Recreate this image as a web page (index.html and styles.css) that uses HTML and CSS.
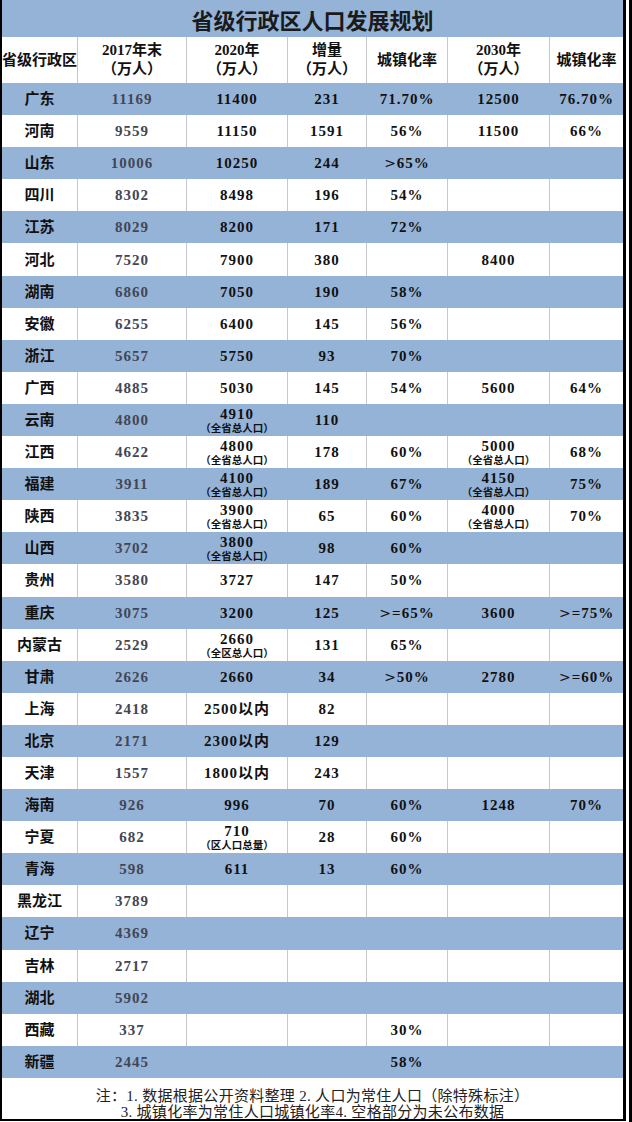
FILE: index.html
```html
<!DOCTYPE html>
<html lang="zh-CN">
<head>
<meta charset="utf-8">
<title>省级行政区人口发展规划</title>
<link rel="stylesheet" href="styles.css">
</head>
<body>
<div class="page">
  <div class="sheet">
    <table class="plan">
      <colgroup>
        <col class="c1"><col class="c2"><col class="c3"><col class="c4"><col class="c5"><col class="c6"><col class="c7">
      </colgroup>
      <thead>
        <tr class="title-row"><th colspan="7" class="title">省级行政区人口发展规划</th></tr>
        <tr class="head-row">
          <th>省级行政区</th>
          <th>2017年末<br>（万人）</th>
          <th>2020年<br>（万人）</th>
          <th>增量<br>（万人）</th>
          <th>城镇化率</th>
          <th>2030年<br>（万人）</th>
          <th>城镇化率</th>
        </tr>
      </thead>
      <tbody>
        <tr class="b"><td>广东</td><td>11169</td><td>11400</td><td>231</td><td>71.70%</td><td>12500</td><td>76.70%</td></tr>
        <tr class="w"><td>河南</td><td>9559</td><td>11150</td><td>1591</td><td>56%</td><td>11500</td><td>66%</td></tr>
        <tr class="b"><td>山东</td><td>10006</td><td>10250</td><td>244</td><td><span class="gt">&gt;</span>65%</td><td></td><td></td></tr>
        <tr class="w"><td>四川</td><td>8302</td><td>8498</td><td>196</td><td>54%</td><td></td><td></td></tr>
        <tr class="b"><td>江苏</td><td>8029</td><td>8200</td><td>171</td><td>72%</td><td></td><td></td></tr>
        <tr class="w"><td>河北</td><td>7520</td><td>7900</td><td>380</td><td></td><td>8400</td><td></td></tr>
        <tr class="b"><td>湖南</td><td>6860</td><td>7050</td><td>190</td><td>58%</td><td></td><td></td></tr>
        <tr class="w"><td>安徽</td><td>6255</td><td>6400</td><td>145</td><td>56%</td><td></td><td></td></tr>
        <tr class="b"><td>浙江</td><td>5657</td><td>5750</td><td>93</td><td>70%</td><td></td><td></td></tr>
        <tr class="w"><td>广西</td><td>4885</td><td>5030</td><td>145</td><td>54%</td><td>5600</td><td>64%</td></tr>
        <tr class="b"><td>云南</td><td>4800</td><td>4910<span class="sub">（全省总人口）</span></td><td>110</td><td></td><td></td><td></td></tr>
        <tr class="w"><td>江西</td><td>4622</td><td>4800<span class="sub">（全省总人口）</span></td><td>178</td><td>60%</td><td>5000<span class="sub">（全省总人口）</span></td><td>68%</td></tr>
        <tr class="b"><td>福建</td><td>3911</td><td>4100<span class="sub">（全省总人口）</span></td><td>189</td><td>67%</td><td>4150<span class="sub">（全省总人口）</span></td><td>75%</td></tr>
        <tr class="w"><td>陕西</td><td>3835</td><td>3900<span class="sub">（全省总人口）</span></td><td>65</td><td>60%</td><td>4000<span class="sub">（全省总人口）</span></td><td>70%</td></tr>
        <tr class="b"><td>山西</td><td>3702</td><td>3800<span class="sub">（全省总人口）</span></td><td>98</td><td>60%</td><td></td><td></td></tr>
        <tr class="w"><td>贵州</td><td>3580</td><td>3727</td><td>147</td><td>50%</td><td></td><td></td></tr>
        <tr class="b"><td>重庆</td><td>3075</td><td>3200</td><td>125</td><td><span class="gt">&gt;</span>=65%</td><td>3600</td><td><span class="gt">&gt;</span>=75%</td></tr>
        <tr class="w"><td>内蒙古</td><td>2529</td><td>2660<span class="sub">（全区总人口）</span></td><td>131</td><td>65%</td><td></td><td></td></tr>
        <tr class="b"><td>甘肃</td><td>2626</td><td>2660</td><td>34</td><td><span class="gt">&gt;</span>50%</td><td>2780</td><td><span class="gt">&gt;</span>=60%</td></tr>
        <tr class="w"><td>上海</td><td>2418</td><td>2500以内</td><td>82</td><td></td><td></td><td></td></tr>
        <tr class="b"><td>北京</td><td>2171</td><td>2300以内</td><td>129</td><td></td><td></td><td></td></tr>
        <tr class="w"><td>天津</td><td>1557</td><td>1800以内</td><td>243</td><td></td><td></td><td></td></tr>
        <tr class="b"><td>海南</td><td>926</td><td>996</td><td>70</td><td>60%</td><td>1248</td><td>70%</td></tr>
        <tr class="w"><td>宁夏</td><td>682</td><td>710<span class="sub">（区人口总量）</span></td><td>28</td><td>60%</td><td></td><td></td></tr>
        <tr class="b"><td>青海</td><td>598</td><td>611</td><td>13</td><td>60%</td><td></td><td></td></tr>
        <tr class="w"><td>黑龙江</td><td>3789</td><td></td><td></td><td></td><td></td><td></td></tr>
        <tr class="b"><td>辽宁</td><td>4369</td><td></td><td></td><td></td><td></td><td></td></tr>
        <tr class="w"><td>吉林</td><td>2717</td><td></td><td></td><td></td><td></td><td></td></tr>
        <tr class="b"><td>湖北</td><td>5902</td><td></td><td></td><td></td><td></td><td></td></tr>
        <tr class="w"><td>西藏</td><td>337</td><td></td><td></td><td>30%</td><td></td><td></td></tr>
        <tr class="b"><td>新疆</td><td>2445</td><td></td><td></td><td>58%</td><td></td><td></td></tr>
      </tbody>
    </table>
    <div class="note">
      <p>注：1. 数据根据公开资料整理 2. 人口为常住人口（除特殊标注）</p>
      <p>3. 城镇化率为常住人口城镇化率4. 空格部分为未公布数据</p>
    </div>
  </div>
  <div class="edge"></div>
</div>
</body>
</html>
```

FILE: styles.css
```css
html, body {
  margin: 0;
  padding: 0;
  background: #ffffff;
}

.page {
  display: flex;
  gap: 3px;
  width: 632px;
  height: 1122px;
  overflow: hidden;
}

.sheet {
  width: 621px;
  border-left: 2px solid #000;
  border-right: 3px solid #000;
  border-bottom: 2px solid #000;
  align-self: flex-start;
  background: #fff;
}

.edge {
  width: 3px;
  background: #000;
}

.plan {
  width: 621px;
  table-layout: fixed;
  border-collapse: separate;
  border-spacing: 0;
  font-family: "Liberation Serif", "Noto Sans CJK SC", serif;
  font-weight: 700;
  color: #111;
}

.c1 { width: 76px; }
.c2 { width: 109px; }
.c3 { width: 101px; }
.c4 { width: 79px; }
.c5 { width: 81px; }
.c6 { width: 102px; }
.c7 { width: 73px; }

.plan th,
.plan td {
  box-sizing: border-box;
  padding: 0;
  text-align: center;
  vertical-align: middle;
  border-right: 1px solid transparent;
  font-size: 15px;
  line-height: 16px;
  white-space: nowrap;
  overflow: hidden;
}

.plan th:last-child,
.plan td:last-child {
  border-right: 0;
}

.title-row {
  height: 37px;
  background: #95b3d7;
}

.plan .title {
  font-family: "Noto Sans CJK SC", sans-serif;
  font-size: 22px;
  line-height: 26px;
  font-weight: 700;
  color: #1a1a1a;
  padding-top: 1px;
  border-right: 0;
}

.head-row {
  height: 46px;
  background: #fff;
}

.head-row th {
  line-height: 19px;
  border-right-color: #c8c8c8;
  color: #111;
}

.plan tbody tr {
  height: 32.1px;
}

.plan tr.b {
  background: #95b3d7;
}

.plan tr.w {
  background: #fff;
}

.plan tr.w td {
  border-right-color: #c8c8c8;
}

.plan tbody td {
  letter-spacing: 1px;
}

.plan tbody td:first-child {
  letter-spacing: 0;
}

.plan tbody td:nth-child(2) {
  color: #424654;
}

.gt {
  font-family: "DejaVu Sans", sans-serif;
  font-weight: 400;
  font-size: 14px;
  letter-spacing: 0;
  margin-right: 1px;
}

.sub {
  display: block;
  font-family: "Noto Sans CJK SC", sans-serif;
  font-size: 10.5px;
  line-height: 12px;
  letter-spacing: 0;
  margin: 0 -6px;
}

.note {
  height: 41px;
  padding-top: 10px;
  box-sizing: border-box;
  overflow: hidden;
  text-align: center;
  font-family: "Liberation Serif", "Noto Sans CJK SC", serif;
  font-size: 15px;
  line-height: 16px;
  letter-spacing: 0.3px;
  color: #222;
}

.note p {
  margin: 0;
}
```
